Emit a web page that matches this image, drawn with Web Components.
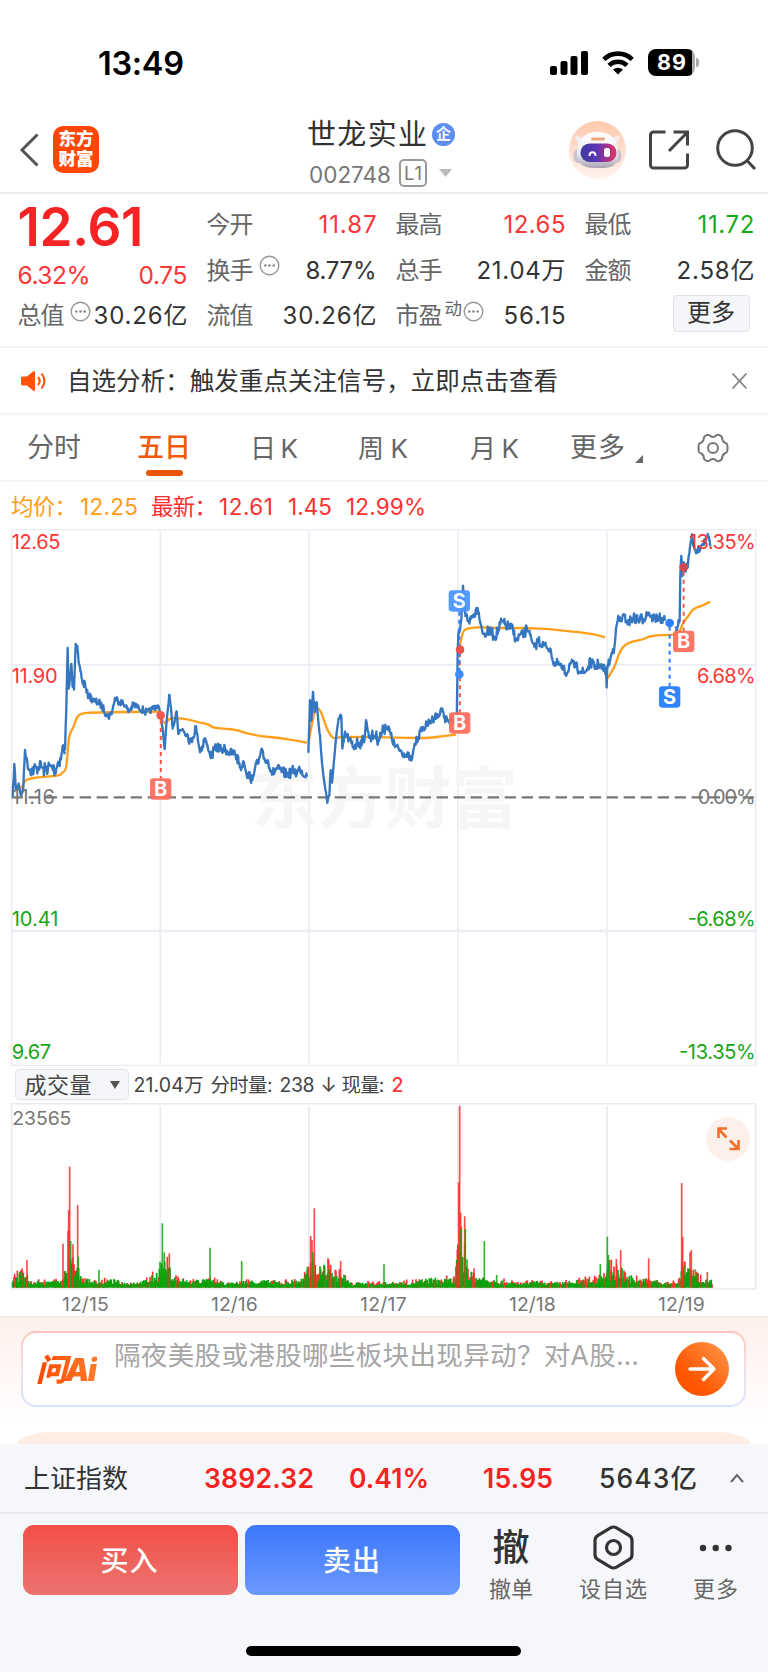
<!DOCTYPE html>
<html lang="zh-CN">
<head>
<meta charset="utf-8">
<title>世龙实业 002748</title>
<style>
html,body{margin:0;background:#fff}
body{width:768px;height:1672px;overflow:hidden;font-family:Inter,"Noto Sans CJK SC",sans-serif;color:#333}
</style>
</head>
<body>
<stock-app></stock-app>
<script>
// Text set to a given width: the tracking is adjusted so the run fills it.
class FitText extends HTMLElement{
  connectedCallback(){
    if(this.shadowRoot)return;
    const r=this.attachShadow({mode:'open'});
    const s=this.getAttribute('s')||24,w=+this.getAttribute('w'),c=this.getAttribute('c'),b=this.getAttribute('b')||400;
    r.innerHTML=`<style>:host{display:block;flex:none;width:${w}px;white-space:nowrap;line-height:1.2;font-size:${s}px;font-weight:${b};${c?`color:${c};`:''}}span{display:inline-block;padding-top:var(--drop,2px)}</style><span><slot></slot></span>`;
    const sp=r.querySelector('span'),n=[...this.textContent].length,nat=sp.getBoundingClientRect().width;
    if(n>1)sp.style.letterSpacing=((w-nat)/(n-1)).toFixed(3)+'px';
  }
}
const define=(name,html)=>customElements.define(name,class extends HTMLElement{
  connectedCallback(){ if(!this.shadowRoot)this.attachShadow({mode:'open'}).innerHTML=html; }
});

define('status-bar',`<style>:host{display:flex;height:100px;align-items:center;box-sizing:border-box;padding:25px 0 0 98px;color:#000}
svg{display:block}.s{margin-left:366px}.w{margin-left:13px}.b{--drop:0px;margin-left:14px;position:relative;width:47px;height:27px;border-radius:8px;background:linear-gradient(90deg,#000 93%,#aaa 93%);color:#fff;display:flex;align-items:center;justify-content:center}
i{width:3px;height:9px;border-radius:0 3px 3px 0;background:#aaa;margin-left:1px}</style>
<fit-text s="32.5" w="86" b="600">13:49</fit-text>
<svg class="s" width="39" height="24"><rect x="0" y="15" width="7" height="9" rx="2"/><rect x="10.5" y="10" width="7" height="14" rx="2"/><rect x="20.500" y="5" width="7" height="19" rx="2"/><rect x="31" y="0" width="7" height="24" rx="2"/></svg>
<svg class="w" width="32" height="24" viewBox="0 0 32 24"><g fill="none" stroke="#000" stroke-width="4.6"><path d="M1.8 8.4a20.3 20.3 0 0 1 28.4 0"/><path d="M7 14.4a12.8 12.8 0 0 1 18 0"/></g><path d="M11 18.6a7.4 7.4 0 0 1 10 0l-5 5z"/></svg>
<div class="b"><fit-text s="21.5" w="29" b="700">89</fit-text></div><i></i>`);

define('top-nav',`<style>:host{display:flex;height:92px;border-bottom:2px solid #eee;align-items:flex-start;box-sizing:content-box}
svg{display:block;flex:none}.back{margin:33px 0 0 19px}.logo{--drop:0px;margin:26px 0 0 14px;width:46px;height:47px;border-radius:10px;background:#ff4703;color:#fff;display:flex;flex-direction:column;align-items:center;justify-content:center;font-weight:900;gap:0}
.logo fit-text{line-height:1;height:19.5px}.mid{margin:16px 0 0 208px;width:150px}.row{display:flex;align-items:center}.t{height:36px}.badge{--drop:0px;width:23px;height:23px;border-radius:50%;background:#5c8df1;margin-left:5px;display:flex;align-items:center;justify-content:center}
.l1{--drop:0px;border:2px solid #999;border-radius:5px;width:24px;height:24px;margin-left:8px;display:flex;align-items:center;justify-content:center}.c{height:38px;padding:2px 0 0 2px}
.bot{margin:20px 0 0 111px}.sh{margin:30px 0 0 22px}.se{margin:29px 0 0 26px}</style>
<svg class="back" width="20" height="34" fill="none" stroke="#555" stroke-width="3"><path d="M18.500 1.500 3 17l15.500 15.500"/></svg>
<div class="logo"><fit-text s="17.500" w="35" b="900">东方</fit-text><fit-text s="17.500" w="35" b="900">财富</fit-text></div>
<div class="mid"><div class="row t"><fit-text s="29" w="120">世龙实业</fit-text><div class="badge"><fit-text s="15" w="15" c="#fff" b="700">企</fit-text></div></div>
<div class="row c"><fit-text s="22.500" w="82" c="#777">002748</fit-text><div class="l1"><fit-text s="18.500" w="18" c="#777">L1</fit-text></div><svg style="margin-left:12px" width="13" height="8"><path d="M0 0h13L6.500 8z" fill="#bbb"/></svg></div></div>
<svg class="bot" width="59" height="60" viewBox="0 0 59 60"><defs><linearGradient id="bg" x2="0" y2="1"><stop stop-color="#ffc8ad"/><stop offset="1" stop-color="#fff3ee"/></linearGradient><linearGradient id="v"><stop stop-color="#3b3b9e"/><stop offset=".45" stop-color="#5b35b5"/><stop offset="1" stop-color="#e6335f"/></linearGradient><linearGradient id="h" x2="0" y2="1"><stop stop-color="#fff"/><stop offset=".6" stop-color="#eceaf0"/><stop offset="1" stop-color="#a9a4b5"/></linearGradient></defs>
<ellipse cx="29.500" cy="30" rx="28.500" ry="29" fill="url(#bg)"/><path d="M7 16c3-1 8 3 11 5l-6 7zM52 16c-3-1-8 3-11 5l6 7z" fill="#f3eef0"/><ellipse cx="10" cy="36" rx="4.500" ry="7" fill="#c7c2cf"/><ellipse cx="49" cy="36" rx="4.500" ry="7" fill="#c7c2cf"/><path d="M9 33C9 18 18 12 29.500 12S50 18 50 33 42 48 29.500 48 9 46 9 33z" fill="url(#h)"/><rect x="23" y="17.500" width="14" height="3" rx="1.500" fill="#e9a87c"/><rect x="12.500" y="23.500" width="36" height="18.500" rx="9" fill="url(#v)"/><path d="M21.500 36c0-5 6-5 6 0" stroke="#fff" stroke-width="2" fill="none"/><rect x="36" y="28" width="6" height="9" rx="2.500" fill="#fff"/></svg>
<svg class="sh" width="41" height="40" fill="none" stroke="#444" stroke-width="3"><path d="M16.500 2H4.500a3 3 0 0 0-3 3v30a3 3 0 0 0 3 3h31a3 3 0 0 0 3-3V23.500M20 21 38 2.800M24.500 2h14v13.500"/></svg>
<svg class="se" width="41" height="42" fill="none" stroke="#444" stroke-width="3"><circle cx="19" cy="19" r="17.300"/><path d="m30.500 31 8.500 9"/></svg>`);

const more=`<svg width="21" height="21" style="display:block;flex:none;position:relative;top:-4px;left:-1px" fill="none" stroke="#999" stroke-width="1.400"><circle cx="10.500" cy="10.500" r="9.300"/><g fill="#888" stroke="none"><circle cx="6.300" cy="10.500" r="1.300"/><circle cx="10.500" cy="10.500" r="1.300"/><circle cx="14.700" cy="10.500" r="1.300"/></g></svg>`;
define('quote-panel',`<style>:host{display:block;height:152px;box-sizing:content-box;border-bottom:2px solid #f5f5f6;padding-left:17.500px}
.g{display:grid;grid-template-columns:repeat(4,170px);grid-template-rows:46px 46px 45px;column-gap:19px;padding-top:7px}
.c{display:flex;align-items:center;justify-content:space-between}.c>div{display:flex;align-items:center}.big{grid-row:1/3;display:flex;flex-direction:column}.big .p{height:52px;margin-top:0;display:flex;align-items:center}.pp{display:flex;justify-content:space-between;align-items:center;height:48px;padding-top:3px}
.btn{width:75px;height:35px;border:1.500px solid #dfe1e7;border-radius:4px;background:#f5f6f9;margin:2px 5px 0 auto;justify-content:center;align-items:center;--drop:0px}</style>
<div class="g">
<div class="big"><div class="p"><fit-text s="53" w="126" b="600" c="#f52323">12.61</fit-text></div><div class="pp"><fit-text s="24.500" w="73" c="#fb3636">6.32%</fit-text><fit-text s="24.500" w="49" c="#fb3636">0.75</fit-text></div></div>
<div class="c"><fit-text w="47" c="#666">今开</fit-text><fit-text w="58" c="#fb3636">11.87</fit-text></div>
<div class="c"><fit-text w="47" c="#666">最高</fit-text><fit-text w="62" c="#fb3636">12.65</fit-text></div>
<div class="c"><fit-text w="47" c="#666">最低</fit-text><fit-text w="57" c="#15ab15">11.72</fit-text></div>
<div class="c"><div><fit-text w="47" c="#666" style="margin-right:6px">换手</fit-text>${more}</div><fit-text w="71">8.77%</fit-text></div>
<div class="c"><fit-text w="47" c="#666">总手</fit-text><fit-text w="89">21.04万</fit-text></div>
<div class="c"><fit-text w="47" c="#666">金额</fit-text><fit-text w="78">2.58亿</fit-text></div>
<div class="c"><div><fit-text w="47" c="#666" style="margin-right:6px">总值</fit-text>${more}</div><fit-text w="94">30.26亿</fit-text></div>
<div class="c"><fit-text w="47" c="#666">流值</fit-text><fit-text w="94">30.26亿</fit-text></div>
<div class="c"><div><fit-text w="47" c="#666" style="margin-right:2px">市盈</fit-text><fit-text s="17.500" w="18" c="#666" style="margin-top:-15px;margin-right:1px">动</fit-text>${more}</div><fit-text w="62">56.15</fit-text></div>
<div class="c btn"><fit-text w="48">更多</fit-text></div>
</div>`);

define('notice-bar',`<style>:host{display:flex;height:65px;border-bottom:2px solid #f5f5f6;align-items:center;padding-left:20px}svg{display:block;flex:none}.x{margin-left:174px}</style>
<svg width="28" height="22" viewBox="0 0 28 22"><path d="M1 8q0-1.500 1.500-1.500H7l6-5q2-1.500 2 1v17q0 2.500-2 1l-6-5H2.500Q1 15.500 1 14z" fill="#ff5208"/><path d="M18 7q3.500 4 0 8M21.500 3.500q6 7.500 0 15" fill="none" stroke="#ff5208" stroke-width="2"/></svg>
<fit-text s="24.500" w="491" style="margin-left:19px">自选分析：触发重点关注信号，立即点击查看</fit-text>
<svg class="x" width="15" height="16" stroke="#888" stroke-width="1.800"><path d="m.5.5 14 15M14.500.5l-14 15"/></svg>`);

define('period-tabs',`<style>:host{display:flex;height:65px;border-bottom:2px solid #f5f5f6;align-items:center;padding-left:27px;color:#666}svg{display:block;flex:none}.a{position:relative}.a:after{content:"";position:absolute;left:8.500px;top:40px;width:37px;height:6px;border-radius:3px;background:#ea5504}</style>
<fit-text s="27" w="54">分时</fit-text><fit-text class="a" s="27" w="54" b="500" c="#f05a0a" style="margin-left:56px">五日</fit-text>
<fit-text s="26" w="48" style="margin-left:59px">日K</fit-text><fit-text s="26" w="50" style="margin-left:60px">周K</fit-text><fit-text s="26" w="49" style="margin-left:62px">月K</fit-text><fit-text s="27" w="55" style="margin-left:51px">更多</fit-text>
<svg style="margin:22px 0 0 10px" width="8" height="8"><path d="M8 0v8H0z" fill="#666"/></svg>
<svg style="margin-left:54px" width="32" height="30" viewBox="0 0 32 30" fill="none" stroke="#777" stroke-width="2"><path d="M10.500 1.800q2 .2 3 1.400 2.500 1.600 5 0 1-1.200 3-1.400 2 .6 3.500 2.400.2 4 2.600 5.300 2.600.8 2.700 2.200l.2 3.300-.2 3.300q-.1 1.400-2.700 2.200-2.400 1.300-2.600 5.300-1.500 1.800-3.500 2.400-2-.2-3-1.400-2.500-1.600-5 0-1 1.200-3 1.400-2-.6-3.500-2.400-.2-4-2.600-5.300-2.600-.8-2.700-2.200L1.500 15l.2-3.300q.1-1.400 2.700-2.200Q6.800 8.200 7 4.200q1.500-1.800 3.500-2.400z"/><circle cx="16" cy="15" r="5"/></svg>`);

define('chart-legend',`<style>:host{display:flex;height:47px;align-items:center;padding-left:11px;color:#fb3030;--drop:1px}</style>
<fit-text s="22.500" w="66" c="#ff9c14">均价：</fit-text><fit-text s="22.500" w="58" c="#ff9c14" style="margin-left:3px">12.25</fit-text><fit-text s="22.500" w="66" style="margin-left:13px">最新：</fit-text><fit-text s="22.500" w="54" style="margin-left:2px">12.61</fit-text><fit-text s="22.500" w="44" style="margin-left:15px">1.45</fit-text><fit-text s="22.500" w="80" style="margin-left:14px">12.99%</fit-text>`);

// Seeded noise so the chart is the same on every load.
let seed=7;const rnd=()=>(seed=(seed*16807)%2147483647)/2147483647;
const pts=(s,dx=0)=>s.trim().split(/\s+/).map(p=>{const[a,b]=p.split(',').map(Number);return[a+dx,b]});
function jagged(a,amp){let d='M'+a[0];for(let i=1;i<a.length;i++){const[x0,y0]=a[i-1],[x1,y1]=a[i];const steep=Math.abs(y1-y0)>3*(x1-x0);const n=Math.max(1,Math.round((x1-x0)/2));for(let k=1;k<=n;k++){const t=k/n,e=(k==n||steep)?.35:1;d+=`L${(x0+(x1-x0)*t).toFixed(1)},${(y0+(y1-y0)*t+(rnd()-.5)*2.8*amp*e).toFixed(1)}`}}return d}
function smooth(a){let d='M'+a[0];for(let i=1;i<a.length-1;i++){const mx=(a[i][0]+a[i+1][0])/2,my=(a[i][1]+a[i+1][1])/2;d+=`Q${a[i]} ${mx},${my}`}return d+'L'+a[a.length-1]}

// Coordinates of both plots are in thirds of a pixel.
const price=[
 [pts('38,830 43,735 48,810 56,790 64,830 70,800 75,690 84,740 96,750 110,745 120,730 130,750 150,740 165,750 175,725 183,715 188,680 195,690'),15],
 [pts('195,690 199,560 203,385 206,510 214,435 218,500 222,505 227,368 232,380 236,430 243,460 248,490 255,490 260,520'),10],
 [pts('260,520 268,530 285,545 300,550 312,570 325,590 335,580 345,535 360,545 375,555 385,575 400,555 415,560 440,578 452,575 462,560 475,558 482,585 487,620 494,690 500,600 508,525'),8],
 [pts('508,525 513,570 518,630 524,600 530,570 535,640 548,625 560,640 572,665 588,622 600,695 615,655 632,710 652,678 665,690 675,685 690,700 705,700 718,730 725,745 730,720 742,770 750,765 757,785 765,740 775,730 783,695 795,720 805,725 818,760 830,745 845,755 865,765 880,750 890,760 900,745 915,765 921,768'),11],
 [pts('55,698 57,640 60,545 64,600 69,512 74,580 80,545 85,600 90,650 96,730 104,795 112,845 118,825 122,745 126,790 132,720 138,660 146,590 154,590 157,690 165,640 175,660 190,680 205,665 215,670 224,650 228,600 235,640 245,650 255,645 265,660 275,640 280,630 290,615 300,640',870),13],
 [pts('300,640 315,680 330,690 345,705 360,712 366,720 372,680 385,650 395,630 410,615 425,600 440,585 447,590 453,565 462,590 475,605 485,600 500,602 502,480 503,400 505,340 510,330 514,300 519,197 523,260 527,290',870),9],
 [pts('527,290 540,300 550,285 563,262 570,300 580,345 595,335 605,340 615,350 625,330 635,305 645,315 655,320 665,325 680,360 690,345 700,350 710,325 718,330',870),12],
 [pts('28,330 35,365 43,385 55,360 65,375 80,380 90,385 97,415 105,435 115,430 125,445 140,460 150,430 165,440 180,450 192,460 205,440 212,425 225,445 235,430 245,445 258,450 260,498 262,440 268,430 275,400 283,380 288,330 293,300',1560),11],
 [pts('293,300 305,300 315,290 325,305 340,295 355,300 370,295 385,275 395,290 405,295 415,290 425,300 435,305',1560),12],
 [pts('466,325 474,318 479,305 481,160 484,110 487,170 490,130 497,150 503,140 506,110 512,65 516,45 520,75 528,100 535,85 545,75 555,60 560,50 563,40 568,60 571,75',1560),10]];
const avg=[pts('60,805 66,803 75,780 90,776 110,772 150,769 182,766 186,757 198,752 203,700 206,655 212,635 224,615 230,590 245,580 280,577 482,575'),
 pts('482,580 486,602 495,612 508,595 530,594 565,598 600,608 625,612 640,624 680,626 715,631 730,637 775,648 840,654 890,662 921,668'),
 pts('57,660 66,610 76,562 88,566 97,585 108,620 120,645 132,657 150,651 200,651 290,652 350,654 420,654 460,648 498,644',870),
 pts('1380,375 1385,350 1391,330 1405,325 1440,321 1470,324 1590,324 1655,328 1710,334 1760,339 1795,346 1815,352'),
 pts('263,475 275,455 285,438 293,412 303,388 318,372 340,364 370,358 385,350 410,346 440,345 465,344 480,335 486,315 495,300 508,285 516,270 530,262 545,258 560,250 571,246',1560)];
const tag=(x,y,t,c,o=1)=>`<g opacity="${o}"><rect x="${x-32}" y="${y-32}" width="64" height="64" rx="10" fill="${c}"/><text x="${x}" y="${y+21}" text-anchor="middle" font-size="60" font-weight="700" fill="#fff">${t}</text></g>`;
const vlines=[481,927,1373.5,1820.5];
define('price-chart',`<style>:host{display:block;height:537px}svg{display:block;font-family:Inter,"Noto Sans CJK SC",sans-serif}</style>
<svg width="768" height="537" viewBox="0 27 2304 1611">
<g fill="none" stroke="#ececf4" stroke-width="5"><path d="M35 28.500H2267V1637H35z"/>${vlines.map(x=>`<path d="M${x} 34V1630"/>`).join('')}<path d="M35 434.500H2267" /><path d="M35 1233H2267" stroke-width="7"/></g>
<text x="754" y="910" font-size="200" font-weight="700" fill="#f6f6f7" textLength="800">东方财富</text>
<path d="M35 832H2267" stroke="#777" stroke-width="7" stroke-dasharray="34 17" fill="none"/>
<g fill="none" stroke="#ff9f1c" stroke-width="7" stroke-linejoin="round">${avg.map(a=>`<path d="${smooth(a)}"/>`).join('')}</g>
<g fill="none" stroke="#3576c0" stroke-width="7" stroke-linejoin="round">${price.map(([a,m])=>`<path d="${jagged(a,m)}"/>`).join('')}</g>
<g fill="none" stroke-width="6" stroke-dasharray="12 12"><path d="M482.500 600V775M1379.500 400V580M2051 155V335" stroke="#f5594b"/><path d="M1378 275V460M2009 320V500" stroke="#2e80ff"/></g>
<circle cx="482" cy="586" r="13" fill="#f5594b"/><circle cx="1380" cy="389" r="13" fill="#e8524c"/><circle cx="1378" cy="463" r="13" fill="#438cff"/><circle cx="2009" cy="309" r="13" fill="#2e80ff"/><circle cx="2051" cy="142" r="13" fill="#d04a50"/>
${tag(482,807,'B','#ff6b5b',.93)}${tag(1379,609,'B','#ff6b5b',.93)}${tag(1378,243,'S','#4a93ff',.93)}${tag(2009,531,'S','#2e85ff')}${tag(2051,364,'B','#ff6b5b',.93)}
<g font-size="60" fill="#fb3636"><text x="35" y="86" textLength="146">12.65</text><text x="35" y="490" textLength="138">11.90</text><text x="35" y="852" fill="#777" textLength="130">11.16</text><text x="35" y="1217" fill="#15a515" textLength="140">10.41</text><text x="35" y="1618" fill="#15a515" textLength="118">9.67</text>
<g text-anchor="end"><text x="2267" y="86" textLength="200">13.35%</text><text x="2267" y="490" textLength="176">6.68%</text><text x="2267" y="852" fill="#777" textLength="174">0.00%</text><text x="2267" y="1217" fill="#15a515" textLength="204">-6.68%</text><text x="2267" y="1618" fill="#15a515" textLength="230">-13.35%</text></g></g>
</svg>`);

define('volume-head',`<style>:host{display:flex;height:37px;align-items:center;padding-left:14.500px;color:#444}.s{width:112px;height:29px;border:1.500px solid #e3e5eb;border-radius:4px;background:#f5f6f9;display:flex;align-items:center;margin-right:5px}</style>
<div class="s"><fit-text s="22" w="67" style="margin-left:9px">成交量</fit-text><svg style="margin-left:18px" width="10" height="8"><path d="M0 0h10L5 8z" fill="#555"/></svg></div>
<fit-text s="19.500" w="70">21.04万</fit-text><fit-text s="19.500" w="62" style="margin-left:7px">分时量:</fit-text><fit-text s="19.500" w="35" style="margin-left:7px">238</fit-text><fit-text s="19.500" w="16" style="margin-left:6px">↓</fit-text><fit-text s="19.500" w="43" style="margin-left:5px">现量:</fit-text><fit-text s="19.500" w="11" b="500" c="#fb3636" style="margin-left:7px">2</fit-text>`);

const env=pts('38,55 60,55 85,40 95,14 115,38 125,16 150,26 185,22 200,75 207,120 215,100 235,70 250,36 280,20 340,28 370,16 430,22 465,48 485,95 505,85 520,42 560,24 600,30 645,26 680,12 740,24 780,26 850,20 905,32 925,65 935,115 950,65 970,90 990,80 1010,50 1030,50 1050,16 1110,16 1154,16 1234,20 1294,34 1334,30 1364,34 1374,150 1396,130 1409,55 1444,42 1484,30 1514,22 1564,14 1604,22 1644,14 1694,18 1754,28 1794,42 1824,80 1859,75 1879,52 1924,26 1949,34 1984,16 2014,16 2039,28 2049,90 2069,68 2084,60 2104,32 2137,26');
const envAt=x=>{for(let i=1;i<env.length;i++)if(x<=env[i][0]){const[a,b]=env[i-1],[c,d]=env[i];return b+(d-b)*(x-a)/(c-a)}return 15};
let red='',green='';
for(let x=38;x<2137;x+=2){const h=4+envAt(x)*(.25+.75*Math.pow(rnd(),1.5)),isRed=rnd()<.36;if(isRed)red+=`M${x} 683V${(683-h*1.05).toFixed(1)}`;else green+=`M${x} 683V${(683-h*.85).toFixed(1)}`}
const spikes='81,600,r 189,551,r 209,320,r 206,450,r 204,512,r 212,543,g 219,553,r 233,435,r 235,590,g 297,629,g 480,605,g 487,490,g 493,577,g 508,580,r 630,563,g 725,603,g 932,528,r 936,540,r 943,445,r 939,575,g 922,620,g 1022,603,r 1152,613,g 1379,137,r 1376,367,r 1382,458,r 1384,500,r 1383,507,g 1394,469,r 1396,507,g 1401,598,g 1453,543,g 1371,610,r 1422,625,r 1490,645,g 1801,612,g 1822,530,g 1825,585,g 1849,597,r 1862,570,r 1946,595,r 2045,369,r 2048,530,r 2054,605,r 2052,617,g 2074,570,r 2070,577,r 2086,628,g 2122,636,r'.split(' ').map(s=>{const[x,y,c]=s.split(',');return `<path d="M${x} 683V${y}" stroke="${c=='r'?'#ff2a2a':'#0ca80c'}" opacity=".85"/>`}).join('');
define('volume-chart',`<style>:host{display:block;height:213px;position:relative}svg{display:block;font-family:Inter,sans-serif}.x{position:absolute;right:18px;top:14px}</style>
<svg width="768" height="213" viewBox="0 129 2304 639"><g fill="none" stroke="#e9e9f1" stroke-width="5"><path d="M35 131H2267V687H35z"/>${vlines.map(x=>`<path d="M${x} 138V680"/>`).join('')}</g>
<text x="37" y="194" font-size="58" fill="#777" textLength="177">23565</text>
<g fill="none" stroke-width="5"><path d="${red}" stroke="#f33"/><path d="${green}" stroke="#0ca00c"/>${spikes}</g>
<g font-size="58" fill="#777" text-anchor="middle">${['15','16','17','18','19'].map((d,i)=>`<text x="${256+i*447}" y="752" textLength="140">12/${d}</text>`).join('')}</g></svg>
<svg class="x" width="44" height="44" viewBox="0 0 44 44"><circle cx="22" cy="22" r="22" fill="#fdf0ea"/><path d="M21 11.500h-8.500V21M12.500 12l8 8.500M32.500 23v9H23.500M24 23.500l8 8" fill="none" stroke="#f1702a" stroke-width="2.600"/></svg>`);

define('ask-ai',`<style>:host{--drop:1px;display:block;height:128px;box-sizing:border-box;border-top:2px solid #f2ecec;background:linear-gradient(#fff0ec,#fff 105px);padding:13px 22px 0 21px;overflow:hidden}
.b{border:2px solid transparent;border-radius:15px;background:linear-gradient(#fff,#fff) padding-box,linear-gradient(#ffc5bb,#f1e0ea 50%,#d9e3fb) border-box;display:flex;box-sizing:content-box;height:72px}
.l{font-style:italic;margin:17px 0 0 13px}.l fit-text{background:linear-gradient(90deg,#ff4a00,#ff7a2c);-webkit-background-clip:text;color:transparent}.t{margin:6px 0 0 17px}.btn{display:block;margin:9px 0 0 36px}.o{height:40px;margin:25px -6px 0 -5px;border-radius:34px 34px 0 0/15px 15px 0 0;background:#fdeee4}</style>
<div class="b"><div class="l"><fit-text s="31" w="61" b="900">问Ai</fit-text></div><fit-text class="t" s="26.500" w="525" c="#a6a6a6">隔夜美股或港股哪些板块出现异动？对A股…</fit-text>
<svg class="btn" width="54" height="54"><defs><linearGradient id="a" x1="1" x2=".3" y2=".7"><stop stop-color="#ff9a4d"/><stop offset="1" stop-color="#ff5500"/></linearGradient></defs><circle cx="27" cy="27" r="27" fill="url(#a)"/><path d="M15 27h24M28.500 16.500 39 27 28.500 37.500" fill="none" stroke="#fff" stroke-width="3.400" stroke-linecap="round" stroke-linejoin="round"/></svg></div><div class="o"></div>`);

define('index-bar',`<style>:host{display:flex;height:68px;border-bottom:2px solid #e8e9ec;background:#f6f7fa;align-items:center;padding-left:24px;color:#f52323}</style>
<fit-text s="26" w="104" c="#333">上证指数</fit-text><fit-text s="26.500" w="110" b="600" style="margin-left:76px">3892.32</fit-text><fit-text s="26.500" w="80" b="600" style="margin-left:35px">0.41%</fit-text><fit-text s="26.500" w="70" b="600" style="margin-left:54px">15.95</fit-text><fit-text s="26.500" w="98" b="500" c="#333" style="margin-left:46px">5643亿</fit-text>
<svg style="margin-left:33px" width="14" height="10" fill="none" stroke="#666" stroke-width="2"><path d="m1 9 6-7 6 7"/></svg>`);

define('trade-bar',`<style>:host{display:flex;flex-direction:column;height:158px;background:#f6f7fa;color:#333;position:relative}.r{display:flex;padding:11px 0 0 22.500px;height:109px}.b{width:215px;height:70px;border-radius:11px;display:flex;align-items:center;justify-content:center;margin-right:7.500px}.b fit-text{margin-left:-2px}.buy{background:linear-gradient(#f24f47,#ec7470)}.sell{background:linear-gradient(#3b77f9,#6c99ff)}
.i{display:flex;flex-direction:column;align-items:center}.k{height:45px;display:flex;align-items:center;justify-content:center;margin-bottom:4px}.home{width:275px;height:10px;border-radius:5px;background:#000;margin:12px 0 0 246px}svg{display:block}</style>
<div class="r"><div class="b buy"><fit-text s="28" w="57" b="500" c="#fff" style="--drop:4px">买入</fit-text></div><div class="b sell"><fit-text s="28" w="57" b="500" c="#fff" style="--drop:4px">卖出</fit-text></div>
<div class="i" style="margin-left:21.500px"><div class="k"><fit-text s="37" w="37" b="500">撤</fit-text></div><fit-text s="22" w="44" c="#666">撤单</fit-text></div>
<div class="i" style="margin-left:46px"><div class="k"><svg width="41" height="45" fill="none" stroke="#333" stroke-width="3.200"><path d="M17.500 2.800q3-1.600 6 0L36 10.300q3 1.800 3 5v14.400q0 3.200-3 5l-12.500 7.500q-3 1.600-6 0L5 34.700q-3-1.800-3-5V15.300q0-3.200 3-5z"/><circle cx="20.500" cy="22.500" r="7"/></svg></div><fit-text s="22" w="68" c="#666">设自选</fit-text></div>
<div class="i" style="margin-left:46px"><div class="k"><svg width="34" height="8" fill="#333"><circle cx="4" cy="4" r="3.200"/><circle cx="16.700" cy="4" r="3.200"/><circle cx="29.500" cy="4" r="3.200"/></svg></div><fit-text s="22" w="45" c="#666">更多</fit-text></div></div><div class="home"></div>`);

define('stock-app',`<style>:host{display:flex;flex-direction:column;width:768px;height:1672px;background:#fff}:host>*{flex:none}</style>
<status-bar></status-bar><top-nav></top-nav><quote-panel></quote-panel><notice-bar></notice-bar><period-tabs></period-tabs><chart-legend></chart-legend><price-chart></price-chart><volume-head></volume-head><volume-chart></volume-chart><ask-ai></ask-ai><index-bar></index-bar><trade-bar></trade-bar>`);
customElements.define('fit-text',FitText);
</script>
</body>
</html>
